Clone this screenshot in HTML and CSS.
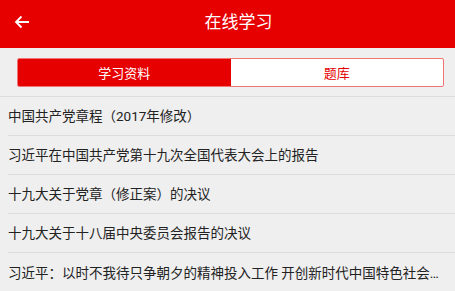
FILE: index.html
```html
<!DOCTYPE html>
<html lang="zh-CN">
<head>
<meta charset="utf-8">
<link rel="stylesheet" href="styles.css">
</head>
<body>
<div class="app">
  <header class="topbar">
    <span class="back">
      <svg width="16" height="14" viewBox="0 0 16 14"><path d="M15 7H2M7.5 1.5L2 7l5.5 5.5" fill="none" stroke="#fff" stroke-width="1.8"/></svg>
    </span>
    <h1 class="title">在线学习</h1>
  </header>
  <div class="tabwrap">
    <div class="tabs">
      <div class="tab active">学习资料</div>
      <div class="tab">题库</div>
    </div>
  </div>
  <ul class="list">
    <li class="item">中国共产党章程（2017年修改）</li>
    <li class="item">习近平在中国共产党第十九次全国代表大会上的报告</li>
    <li class="item">十九大关于党章（修正案）的决议</li>
    <li class="item">十九大关于十八届中央委员会报告的决议</li>
    <li class="item">习近平<span class="punct">：</span>以时不我待只争朝夕的精神投入工作 开创新时代中国特色社会主义事业新局面</li>
  </ul>
</div>
</body>
</html>
```
FILE: styles.css
```css
* { box-sizing: border-box; }
html, body { margin: 0; padding: 0; }
body {
  width: 455px;
  height: 291px;
  overflow: hidden;
  background: #efefef;
  font-family: "Noto Sans CJK SC", "Noto Sans", sans-serif;
  text-spacing-trim: space-all;
}
.topbar {
  position: relative;
  height: 48px;
  background: #e60000;
  display: flex;
  align-items: center;
  justify-content: center;
  padding-left: 22px;
}
.back {
  position: absolute;
  left: 14px;
  top: 15px;
  display: flex;
}
.title {
  margin: 0;
  color: #fff;
  font-size: 17px;
  font-weight: normal;
  line-height: 1;
  margin-top: -8px;
}
.tabwrap {
  height: 49px;
  padding: 10px 11px 0 17px;
  border-bottom: 1px solid #dcdcdc;
}
.tabs {
  display: flex;
  height: 29px;
  border: 1px solid #f07474;
  border-radius: 2px;
  background: #fff;
  overflow: hidden;
}
.tab {
  flex: 1;
  display: flex;
  align-items: center;
  justify-content: center;
  font-size: 13px;
  color: #e60000;
}
.tab.active {
  background: #e60000;
  color: #fff;
}
.list {
  list-style: none;
  margin: 0;
  padding: 0 0 0 8px;
}
.item {
  height: 39px;
  line-height: 38px;
  border-bottom: 1px solid #dcdcdc;
  font-family: Roboto, "Noto Sans CJK SC", sans-serif;
  font-size: 13.5px;
  color: #222;
  white-space: nowrap;
  overflow: hidden;
  text-overflow: ellipsis;
  padding-right: 10px;
}
.punct {
  font-family: "Noto Sans CJK TC", "Noto Sans CJK SC", sans-serif;
}
```
